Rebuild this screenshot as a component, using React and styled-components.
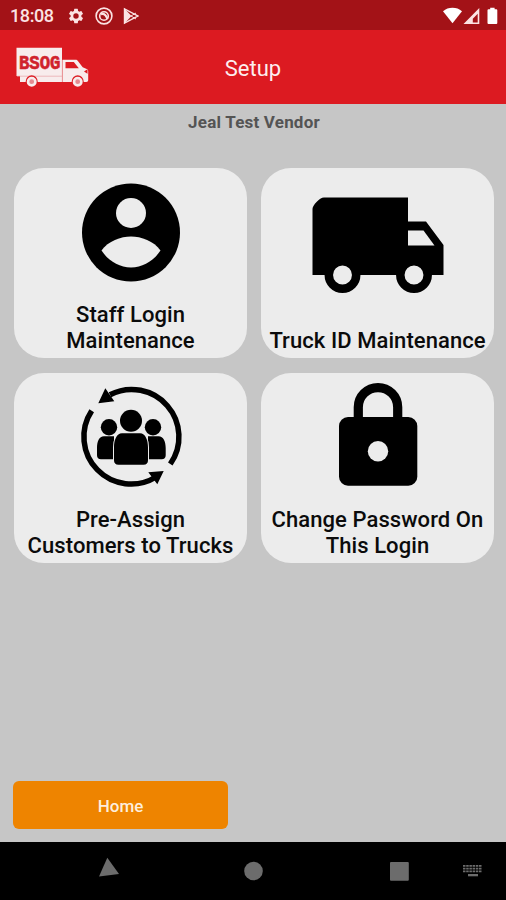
import React from 'react';
import styled, { createGlobalStyle } from 'styled-components';

const GlobalStyle = createGlobalStyle`
  body {
    margin: 0;
    background: #c6c6c6;
    font-family: Roboto, "Liberation Sans", sans-serif;
  }
`;

const Screen = styled.div`
  display: flex;
  flex-direction: column;
  box-sizing: border-box;
  width: 506px;
  height: 900px;
  overflow: hidden;
  background: #c6c6c6;
`;

const StatusBar = styled.div`
  display: flex;
  align-items: center;
  justify-content: space-between;
  flex: none;
  box-sizing: border-box;
  height: 30px;
  padding: 1px 8px 0 10px;
  background: #a31217;
`;

const StatusGroup = styled.div`
  display: flex;
  align-items: center;
  gap: ${({ $gap }) => $gap}px;
`;

const Clock = styled.span`
  width: 44px;
  margin-right: 3px;
  color: #fbe3e3;
  font-size: 18px;
  font-weight: 500;
  line-height: 28px;
  letter-spacing: -0.4px;
  white-space: nowrap;
`;

const Header = styled.header`
  display: grid;
  grid-template-columns: 90px 1fr 90px;
  align-items: center;
  flex: none;
  box-sizing: border-box;
  height: 74px;
  padding-top: 1px;
  background: #dc1a21;
`;

const Logo = styled.svg`
  display: block;
  width: 90px;
  height: 73px;
`;

const HeaderTitle = styled.h1`
  margin: 2px 0 0;
  color: #fdeeee;
  font-size: 22px;
  font-weight: 400;
  line-height: 28px;
  text-align: center;
`;

const Vendor = styled.div`
  flex: none;
  height: 64px;
  padding-left: 2px;
  color: #545454;
  font-size: 17px;
  font-weight: 700;
  line-height: 37px;
  letter-spacing: 0.2px;
  text-align: center;
`;

const TileGrid = styled.div`
  display: grid;
  grid-template-columns: 233px 233px;
  grid-auto-rows: 190px;
  gap: 15px 14px;
  padding-left: 14px;
`;

const Tile = styled.button`
  display: flex;
  flex-direction: column;
  justify-content: space-between;
  box-sizing: border-box;
  width: 100%;
  height: 100%;
  padding: 0 0 4px;
  border: none;
  border-radius: 30px;
  background: #ececec;
  color: #0b0b0b;
  font-family: inherit;
  cursor: pointer;
`;

const TileIcon = styled.svg`
  display: block;
  flex: none;
  width: 233px;
  height: 130px;
`;

const TileLabel = styled.span`
  display: block;
  width: 100%;
  font-size: 22px;
  font-weight: 500;
  line-height: 26px;
  letter-spacing: 0.07px;
  text-align: center;
  white-space: pre-line;
`;

const Footer = styled.div`
  margin-top: auto;
  padding: 0 0 13px 13px;
`;

const HomeButton = styled.button`
  display: block;
  width: 215px;
  height: 48px;
  padding: 2px 0 0;
  border: none;
  border-radius: 6px;
  background: #ee8400;
  color: #fdeedd;
  font-family: inherit;
  font-size: 17px;
  font-weight: 500;
  cursor: pointer;
`;

const NavBar = styled.nav`
  display: flex;
  flex: none;
  box-sizing: border-box;
  height: 58px;
  padding: 15px 0 0 99px;
  background: #000;
`;

const NavIcon = styled.svg`
  display: block;
  flex: none;
  width: 20px;
  height: 28px;
  margin-right: ${({ $after }) => $after || 0}px;
  fill: #6c6c6c;
`;

const GearIcon = () => (
  <svg width="18" height="18" viewBox="0 0 24 24" fill="#fbe3e3">
    <path d="M19.14 12.94c.04-.3.06-.61.06-.94s-.02-.64-.07-.94l2.03-1.58a.49.49 0 0 0 .12-.61l-1.92-3.32a.49.49 0 0 0-.59-.22l-2.39.96a7 7 0 0 0-1.62-.94l-.36-2.54a.48.48 0 0 0-.48-.41h-3.84a.48.48 0 0 0-.47.41l-.36 2.54c-.59.24-1.13.57-1.62.94l-2.39-.96a.48.48 0 0 0-.59.22L2.74 8.87a.48.48 0 0 0 .12.61l2.03 1.58a7.2 7.2 0 0 0 0 1.88l-2.03 1.58a.49.49 0 0 0-.12.61l1.92 3.32c.12.22.37.29.59.22l2.39-.96c.5.38 1.03.7 1.62.94l.36 2.54c.05.24.24.41.48.41h3.84c.24 0 .44-.17.47-.41l.36-2.54a7 7 0 0 0 1.62-.94l2.39.96c.22.08.47 0 .59-.22l1.92-3.32a.48.48 0 0 0-.12-.61zM12 15.6a3.6 3.6 0 1 1 0-7.2 3.6 3.6 0 0 1 0 7.2z" />
  </svg>
);

const TrackIcon = () => (
  <svg width="18" height="18" viewBox="0 0 18 18" fill="none" stroke="#fbe3e3">
    <circle cx="9" cy="9" r="7.9" strokeWidth="1.6" />
    <circle cx="9" cy="9" r="4.3" strokeWidth="1.6" />
    <path d="M6 7.200c2.500-.8 5 .8 6.400 4.800" strokeWidth="2.200" />
  </svg>
);

const PlayIcon = () => (
  <svg width="16" height="18" viewBox="0 0 16 18">
    <path d="M1.5 1.800v14.400L14.800 9z" fill="none" stroke="#fbe3e3" strokeWidth="1.400" />
    <path d="M1 1v16l7.500-8z" fill="#fbe3e3" />
    <path d="M8 9l5-3M8 9l5 3" stroke="#fbe3e3" />
  </svg>
);

const SignalIcons = () => (
  <svg width="56" height="18" viewBox="442 6 56 18" fill="#fff">
    <path d="M443 10.200a14.800 14.800 0 0 1 19 0L452.500 22.300z" />
    <path d="M479.300 7v16H463.500zM477.700 12.800l-4.900 5v3.600h4.900z" fillRule="evenodd" fill="#fbe3e3" />
    <path d="M487.500 9.200a1 1 0 0 1 1-1h1.700V6.700h4.400v1.500h1.700a1 1 0 0 1 1 1v12.900a1 1 0 0 1-1 1h-7.800a1 1 0 0 1-1-1z" />
  </svg>
);

const BsogLogo = () => (
  <Logo viewBox="0 31 90 73">
    <path d="M16.500 47.800H62V76H16.500zM20 76h42v6H20z" fill="#f8ecec" />
    <path d="M62.500 59.800h13.200c1 0 1.600.4 2.200 1.200l4.800 6.300 4 1.700c1 .4 1.500 1.200 1.500 2.200V80c0 1.300-.7 2-2 2H62.500z" fill="#f8ecec" />
    <path d="M65.500 62h8.300l5 6.200H65.500z" fill="#dc1a21" />
    <path d="M62.300 60v22M17 76.200h45" stroke="#e9a3a8" strokeWidth=".7" />
    <path d="M84 71.500l3.500-2.200v4.500z" fill="#dc1a21" />
    <circle cx="31.700" cy="81.200" r="5.900" fill="#dc1a21" />
    <circle cx="77.700" cy="81.200" r="5.900" fill="#dc1a21" />
    <circle cx="31.700" cy="81.700" r="3.700" fill="#e58a90" stroke="#f8ecec" strokeWidth="2.600" />
    <circle cx="77.700" cy="81.700" r="3.700" fill="#e58a90" stroke="#f8ecec" strokeWidth="2.600" />
    <text
      x="19"
      y="69"
      fill="#d0222b"
      fontFamily="'Liberation Mono', monospace"
      fontSize="20"
      fontWeight="700"
      stroke="#d0222b"
      strokeWidth=".6"
      textLength="41.500"
      lengthAdjust="spacingAndGlyphs"
    >
      BSOG
    </text>
  </Logo>
);

const StaffIcon = () => (
  <TileIcon viewBox="0 0 233 130">
    <circle cx="117" cy="64.500" r="49" />
    <circle cx="117" cy="45" r="15" fill="#ececec" />
    <path d="M87.500 82.500C94 73 107 68.500 117 68.500S140 73 146.500 82.500C140 92.500 129 99.500 117 99.500S94 92.500 87.500 82.500z" fill="#ececec" />
  </TileIcon>
);

const TruckIcon = () => (
  <TileIcon viewBox="0 0 233 130">
    <path d="M51.500 107V41C51.500 37.500 58.500 29.500 63 29.500H147v24h18L182.500 77v30z" />
    <path d="M147 62.500h15.500L173.500 77.500H147z" fill="#ececec" />
    <circle cx="81.500" cy="107" r="13.700" fill="#ececec" stroke="#000" strokeWidth="8.500" />
    <circle cx="153" cy="107" r="13.700" fill="#ececec" stroke="#000" strokeWidth="8.500" />
  </TileIcon>
);

const AssignIcon = () => (
  <TileIcon viewBox="0 0 233 130">
    <g fill="none" stroke="#000" strokeWidth="5.500">
      <path d="M96 21.700A47.300 47.300 0 0 1 156.300 91" />
      <path d="M77.700 37.700A47.300 47.300 0 0 0 142 104" />
    </g>
    <path d="M91.300 15.200L84.300 30.200 100.300 28.300zM134.300 99.300L149.700 98 143.300 111.300z" />
    <circle cx="95" cy="54.300" r="8.200" />
    <circle cx="139" cy="54.300" r="8.200" />
    <path d="M90 63.300h10v23H87c-2.500 0-4-1.500-4-4V75c0-6 2-11.700 7-11.700zM134 63.300h10.500c5 0 7.200 5.700 7.200 11.700v7.300c0 2.500-1.500 4-4 4H134z" />
    <path
      d="M108 60.300h18c5.500 0 8 7 8 14v13c0 3-1.500 4.400-4.500 4.400h-25c-3 0-4.500-1.400-4.500-4.400v-13c0-7 2.500-14 8-14z"
      stroke="#ececec"
      strokeWidth="2"
      paintOrder="stroke"
    />
    <circle cx="117" cy="47.700" r="11" stroke="#ececec" strokeWidth="2" paintOrder="stroke" />
  </TileIcon>
);

const LockIcon = () => (
  <TileIcon viewBox="0 0 233 130">
    <path d="M97.300 48V34.300a19.700 19.700 0 0 1 39.400 0V48" fill="none" stroke="#000" strokeWidth="9.200" />
    <rect x="78" y="44" width="78.300" height="68.700" rx="9" />
    <circle cx="117" cy="78.300" r="10.200" fill="#ececec" />
  </TileIcon>
);

const tiles = [
  { label: 'Staff Login\nMaintenance', Icon: StaffIcon },
  { label: 'Truck ID Maintenance', Icon: TruckIcon },
  { label: 'Pre-Assign\nCustomers to Trucks', Icon: AssignIcon },
  { label: 'Change Password On\nThis Login', Icon: LockIcon },
];

const keyColumns = [0, 3.2, 6.4, 9.6, 12.8, 16];

const App = () => {
  return (
    <>
      <GlobalStyle />
      <Screen>
        <StatusBar>
          <StatusGroup $gap={10}>
            <Clock>18:08</Clock>
            <GearIcon />
            <TrackIcon />
            <PlayIcon />
          </StatusGroup>
          <SignalIcons />
        </StatusBar>
        <Header>
          <BsogLogo />
          <HeaderTitle>Setup</HeaderTitle>
        </Header>
        <Vendor>Jeal Test Vendor</Vendor>
        <TileGrid>
          {tiles.map(({ label, Icon }) => (
            <Tile key={label}>
              <Icon />
              <TileLabel>{label}</TileLabel>
            </Tile>
          ))}
        </TileGrid>
        <Footer>
          <HomeButton>Home</HomeButton>
        </Footer>
        <NavBar>
          <NavIcon viewBox="0 0 20 28" $after={125}>
            <path d="M8.300.7L20 17 0 19.500z" />
          </NavIcon>
          <NavIcon viewBox="0 0 20 28" $after={126}>
            <circle cx="9.500" cy="14" r="9.300" />
          </NavIcon>
          <NavIcon viewBox="0 0 20 28" $after={53}>
            <rect x="0" y="5" width="18.800" height="18.800" rx="1" />
          </NavIcon>
          <NavIcon viewBox="0 0 20 28">
            {keyColumns.map((x) => (
              <path key={x} d={`M${x} 8h2.500v1.800h-2.500zM${x} 10.700h2.500v1.800h-2.500zM${x} 13.400h2.500v1.800h-2.500z`} />
            ))}
            <rect x="5" y="17" width="10" height="2.300" />
          </NavIcon>
        </NavBar>
      </Screen>
    </>
  );
};

export default App;
